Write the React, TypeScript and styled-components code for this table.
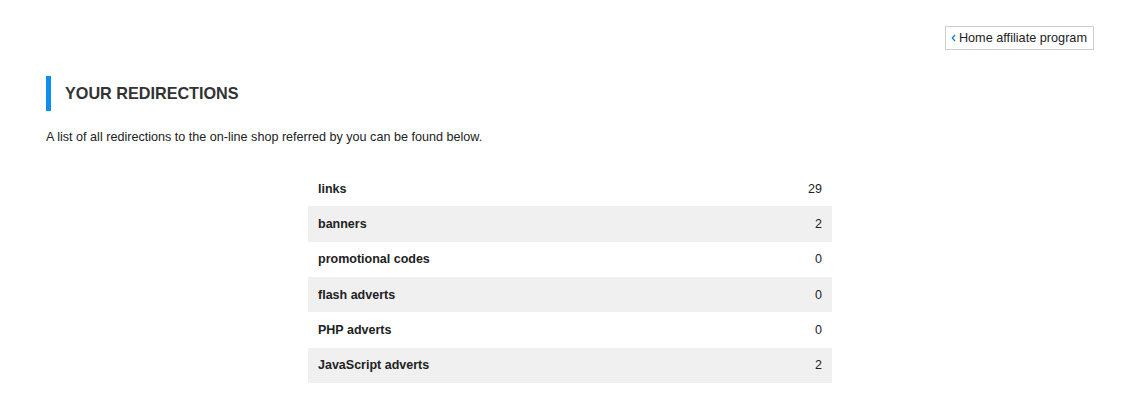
import React from "react";
import styled, { createGlobalStyle } from "styled-components";

const Global = createGlobalStyle`
  html, body { margin: 0; padding: 0; background: #fff; }
  body { font-family: "Liberation Sans", Arial, Helvetica, sans-serif; color: #333; }
`;

const Page = styled.div`
  width: 1126px;
  height: 404px;
  box-sizing: border-box;
  padding: 26px 32px 0 46px;
  display: flex;
  flex-direction: column;
`;

const TopBar = styled.div`
  display: flex;
  justify-content: flex-end;
`;

const BackButton = styled.a`
  display: inline-flex;
  align-items: center;
  gap: 3px;
  height: 24px;
  box-sizing: border-box;
  padding: 0 6px 0 5px;
  border: 1px solid #cfcfcf;
  font-size: 12.7px;
  color: #222;
  text-decoration: none;
`;

const Heading = styled.h2`
  margin: 26px 0 0;
  height: 35px;
  box-sizing: border-box;
  border-left: 5px solid #0a8ff0;
  padding-left: 14px;
  display: flex;
  align-items: center;
  font-size: 16.2px;
  font-weight: bold;
  color: #333;
  text-transform: uppercase;
`;

const Intro = styled.p`
  margin: 19px 0 0;
  font-size: 12.6px;
  line-height: 15px;
  color: #222;
`;

const Table = styled.div`
  margin: 26px 0 0 262px;
  width: 524px;
  display: flex;
  flex-direction: column;
`;

const Row = styled.div<{ $shaded: boolean }>`
  height: 35.33px;
  display: flex;
  align-items: center;
  justify-content: space-between;
  padding: 0 10px;
  background: ${(p) => (p.$shaded ? "#f0f0f0" : "#fff")};
  font-size: 12.5px;
  color: #222;
`;

const Label = styled.span`
  font-weight: bold;
`;

const Value = styled.span``;

const rows: [string, number][] = [
  ["links", 29],
  ["banners", 2],
  ["promotional codes", 0],
  ["flash adverts", 0],
  ["PHP adverts", 0],
  ["JavaScript adverts", 2],
];

export default function App() {
  return (
    <>
      <Global />
      <Page>
        <TopBar>
          <BackButton href="#">
            <svg width="5" height="8" viewBox="0 0 5 8">
              <path d="M4 1 L1.3 4 L4 7" fill="none" stroke="#0a7fd8" strokeWidth="1.3" />
            </svg>
            Home affiliate program
          </BackButton>
        </TopBar>
        <Heading>Your redirections</Heading>
        <Intro>A list of all redirections to the on-line shop referred by you can be found below.</Intro>
        <Table>
          {rows.map(([label, value], i) => (
            <Row key={label} $shaded={i % 2 === 1}>
              <Label>{label}</Label>
              <Value>{value}</Value>
            </Row>
          ))}
        </Table>
      </Page>
    </>
  );
}
